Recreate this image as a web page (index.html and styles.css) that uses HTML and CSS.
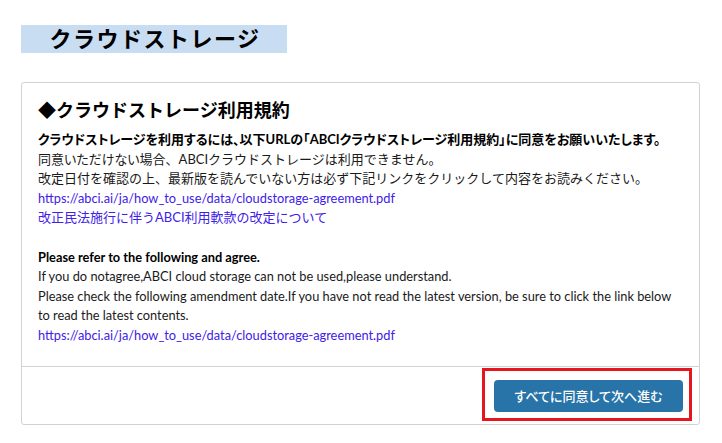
FILE: index.html
```html
<!DOCTYPE html>
<html lang="ja">
<head>
<meta charset="utf-8">
<link rel="stylesheet" href="styles.css">
</head>
<body>
<div class="page">
  <h1 class="title">クラウドストレージ</h1>
  <div class="card">
    <div class="card-body">
      <h2 class="heading">◆クラウドストレージ利用規約</h2>
      <p class="text">
        <strong class="lead">クラウドストレージを利用するには、以下URLの「ABCIクラウドストレージ利用規約」に同意をお願いいたします。</strong><br>
        <span class="tight">同意いただけない場合</span>、ABCIクラウドストレージは利用できません。<br>
        改定日付を確認の上、最新版を読んでいない方は必ず下記リンクをクリックして内容をお読みください。<br>
        <a class="link en" href="#">https://abci.ai/ja/how_to_use/data/cloudstorage-agreement.pdf</a><br>
        <a class="link" href="#">改正民法施行に伴うABCI利用軟款の改定について</a><br>
        <br>
        <span class="en"><strong>Please refer to the following and agree.</strong><br>
        If you do notagree,ABCI cloud storage can not be used,please understand.<br>
        Please check the following amendment date.If you have not read the latest version, be sure to click the link below to read the latest contents.<br>
        <a class="link" href="#">https://abci.ai/ja/how_to_use/data/cloudstorage-agreement.pdf</a></span>
      </p>
    </div>
    <div class="card-footer">
      <div class="highlight">
        <button class="btn" type="button">すべてに同意して次へ進む</button>
      </div>
    </div>
  </div>
</div>
</body>
</html>
```
FILE: styles.css
```css
html, body {
  margin: 0;
  padding: 0;
  background: #ffffff;
}
body {
  font-family: Lato, "Noto Sans CJK JP", sans-serif;
  color: #1a1a1a;
}
.page {
  padding: 25px 22px 0 21px;
}
.title {
  margin: 0;
  width: 266px;
  height: 28px;
  line-height: 28px;
  padding-left: 2px;
  box-sizing: border-box;
  background: #c8ddf2;
  font-size: 22px;
  font-weight: 700;
  text-align: center;
  color: #000;
  letter-spacing: 1.5px;
}
.card {
  margin-top: 29px;
  width: 677px;
  border: 1px solid #d2d2d2;
  border-radius: 3px;
}
.card-body {
  padding: 15px 16px 20px 16px;
}
.heading {
  margin: 0 0 8px 0;
  font-size: 18px;
  line-height: 24px;
  font-weight: 700;
  color: #000;
}
.text {
  margin: 0;
  font-size: 13px;
  line-height: 19.6px;
  color: #1a1a1a;
}
.en {
  font-size: 12.8px;
}
.text strong {
  font-weight: 700;
  color: #000;
}
.lead {
  font-feature-settings: "palt";
}
.tight {
  font-feature-settings: "palt";
}
.link {
  color: #4020e8;
  text-decoration: none;
}
.card-footer {
  border-top: 1px solid #d2d2d2;
  padding: 1px 7px 3px 0;
  display: flex;
  justify-content: flex-end;
}
.highlight {
  border: 3px solid #e5161d;
  padding: 9px 6px 6px 9px;
  display: flex;
}
.btn {
  width: 189px;
  height: 32px;
  border: none;
  border-radius: 4px;
  background: #2874a8;
  color: #ffffff;
  font-family: Lato, "Noto Sans CJK JP", sans-serif;
  font-size: 13px;
  font-weight: 500;
  padding: 0;
  font-feature-settings: "palt";
}
```
